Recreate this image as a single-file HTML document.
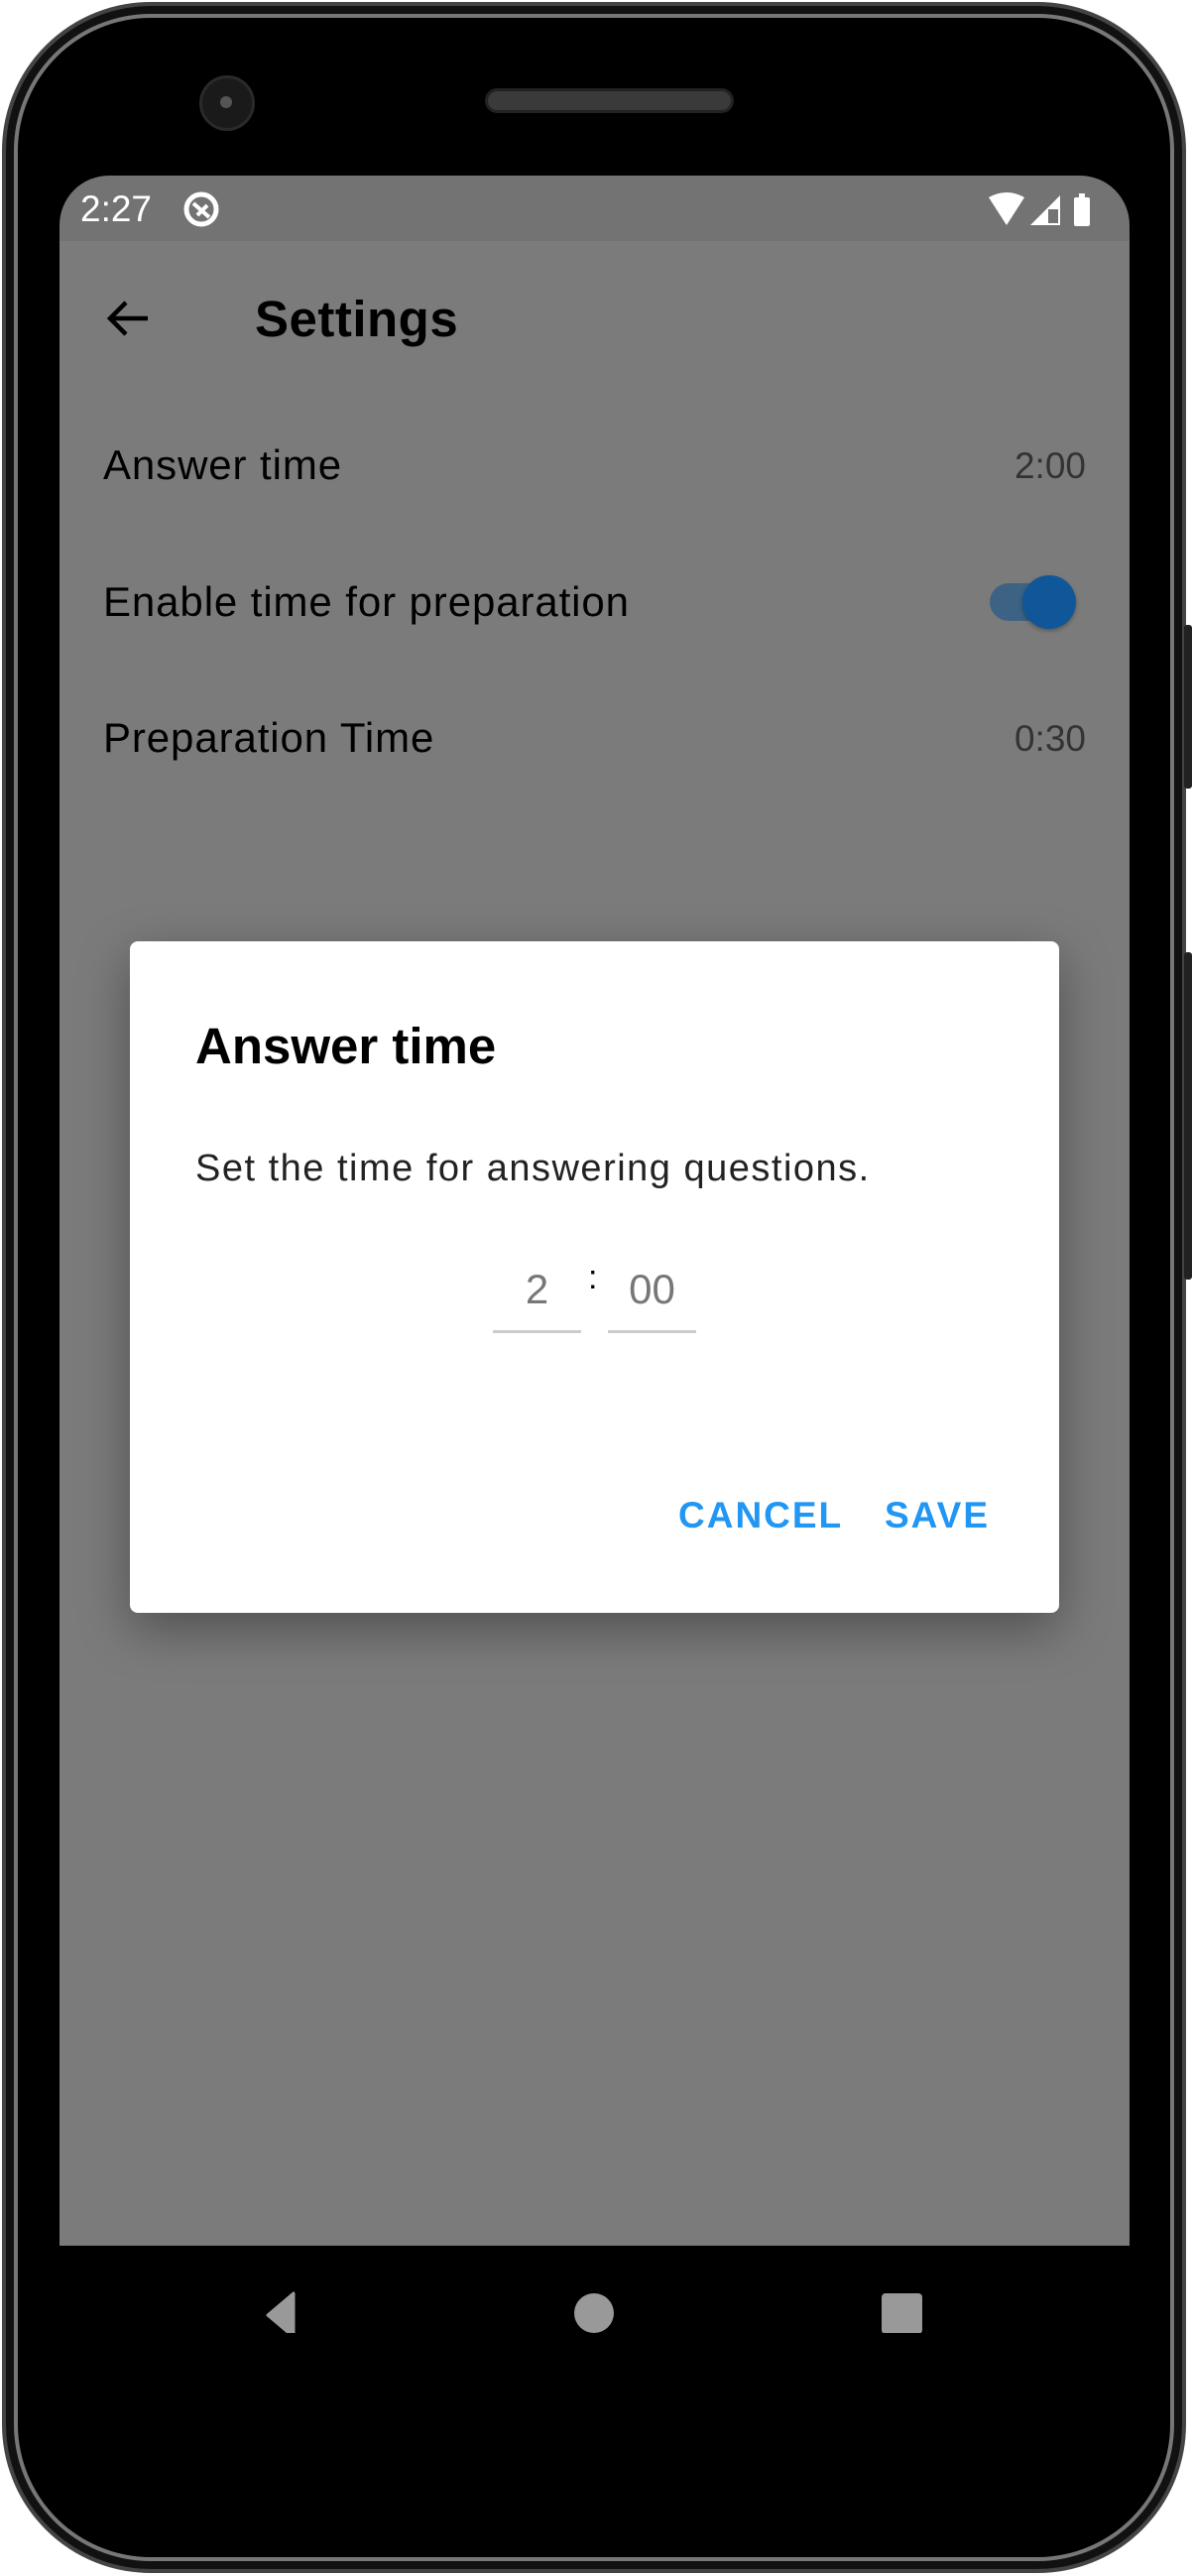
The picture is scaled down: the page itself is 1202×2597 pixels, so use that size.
<!DOCTYPE html>
<html><head><meta charset="utf-8"><style>
*{margin:0;padding:0;box-sizing:border-box}
body{width:1202px;height:2597px;background:#fff;position:relative;overflow:hidden;font-family:"Liberation Sans",sans-serif}
.abs{position:absolute}
.phone{left:2px;top:2px;width:1194px;height:2592px;background:#000;border-radius:150px;border:4px solid #444;box-shadow:inset 0 0 0 8px #111,inset 0 0 0 12px #777,inset 0 0 0 16px #000}
.btn{background:#222;border-radius:3px}
.screen{left:60px;top:177px;width:1079px;height:2175px;border-radius:50px;overflow:hidden;background:#000}
.txt{color:#000;white-space:nowrap}
</style></head><body>
<div class="abs phone"></div>
<div class="abs btn" style="left:1194px;top:630px;width:8px;height:165px"></div>
<div class="abs btn" style="left:1194px;top:960px;width:8px;height:330px"></div>
<div class="abs" style="left:201px;top:76px;width:56px;height:56px;border-radius:50%;background:#1a1a1a;border:3px solid #2a2a2a"></div>
<div class="abs" style="left:222px;top:97px;width:12px;height:12px;border-radius:50%;background:#555"></div>
<div class="abs" style="left:489px;top:89px;width:251px;height:25px;border-radius:13px;background:#3a3a3a;border:3px solid #222"></div>
<div class="abs screen">
  <div class="abs" style="left:0;top:0;width:1079px;height:66px;background:#737373"></div>
  <div class="abs" style="left:0;top:66px;width:1079px;height:2021px;background:#7b7b7b"></div>
  <div class="abs" style="left:0;top:2087px;width:1079px;height:88px;background:#000"></div>
  <div class="abs txt" style="left:21px;top:13px;font-size:37px;color:#fff">2:27</div>
  <svg class="abs" style="left:123px;top:14px" width="40" height="40" viewBox="0 0 40 40"><circle cx="20" cy="20" r="15" fill="none" stroke="#fff" stroke-width="5"/><path d="M12 14 L28 28 M16 26 L26 16" stroke="#fff" stroke-width="4"/></svg>
  <svg class="abs" style="left:935px;top:16px" width="110" height="36" viewBox="0 0 110 36"><path d="M2 6 Q20 -4 38 6 L20 34 Z" fill="#fff"/><path d="M44 34 L74 4 L74 34 Z" fill="#fff"/><rect x="62" y="18" width="10" height="14" fill="#737373"/><rect x="88" y="6" width="16" height="29" rx="2" fill="#fff"/><rect x="93" y="2" width="6" height="5" fill="#fff"/></svg>
  <svg class="abs" style="left:45px;top:122px" width="50" height="44" viewBox="0 0 50 44"><path d="M44 22 H8 M22 6 L6 22 L22 38" fill="none" stroke="#000" stroke-width="4.5"/></svg>
  <div class="abs txt" style="left:197px;top:115px;font-size:51px;font-weight:bold;letter-spacing:0.5px">Settings</div>
  <div class="abs txt" style="left:44px;top:268px;font-size:42px;letter-spacing:0.9px">Answer time</div>
  <div class="abs txt" style="right:44px;top:272px;font-size:37px;color:#333">2:00</div>
  <div class="abs txt" style="left:44px;top:406px;font-size:42px;letter-spacing:0.9px">Enable time for preparation</div>
  <div class="abs" style="left:938px;top:411px;width:78px;height:38px;border-radius:19px;background:#3d6384"></div>
  <div class="abs" style="left:971px;top:403px;width:54px;height:54px;border-radius:50%;background:#0f5799;box-shadow:0 2px 4px rgba(0,0,0,.3)"></div>
  <div class="abs txt" style="left:44px;top:543px;font-size:42px;letter-spacing:0.9px">Preparation Time</div>
  <div class="abs txt" style="right:44px;top:547px;font-size:37px;color:#333">0:30</div>
  <div class="abs" style="left:71px;top:772px;width:937px;height:677px;background:#fff;border-radius:8px;box-shadow:0 16px 50px rgba(0,0,0,.35)">
    <div class="abs txt" style="left:66px;top:76px;font-size:51px;font-weight:bold">Answer time</div>
    <div class="abs txt" style="left:66px;top:208px;font-size:38px;color:#222;letter-spacing:1.5px">Set the time for answering questions.</div>
    <div class="abs txt" style="left:366px;top:327px;width:89px;text-align:center;font-size:42px;color:#777">2</div>
    <div class="abs" style="left:366px;top:392px;width:89px;height:3px;background:#ccc"></div>
    <div class="abs txt" style="left:462px;top:320px;font-size:34px;color:#000">:</div>
    <div class="abs txt" style="left:482px;top:327px;width:89px;text-align:center;font-size:42px;color:#777">00</div>
    <div class="abs" style="left:482px;top:392px;width:89px;height:3px;background:#ccc"></div>
    <div class="abs txt" style="left:553px;top:558px;font-size:37px;color:#2196f3;font-weight:bold;letter-spacing:2px">CANCEL</div>
    <div class="abs txt" style="left:761px;top:558px;font-size:37px;color:#2196f3;font-weight:bold;letter-spacing:2px">SAVE</div>
  </div>
  <svg class="abs" style="left:200px;top:2132px" width="50" height="50" viewBox="0 0 50 50"><path d="M36 3 L36 47 L10 25 Z" fill="#999" stroke="#999" stroke-linejoin="round" stroke-width="3"/></svg>
  <div class="abs" style="left:519px;top:2135px;width:40px;height:40px;border-radius:50%;background:#999"></div>
  <div class="abs" style="left:829px;top:2135px;width:41px;height:41px;border-radius:4px;background:#999"></div>
</div>
</body></html>
